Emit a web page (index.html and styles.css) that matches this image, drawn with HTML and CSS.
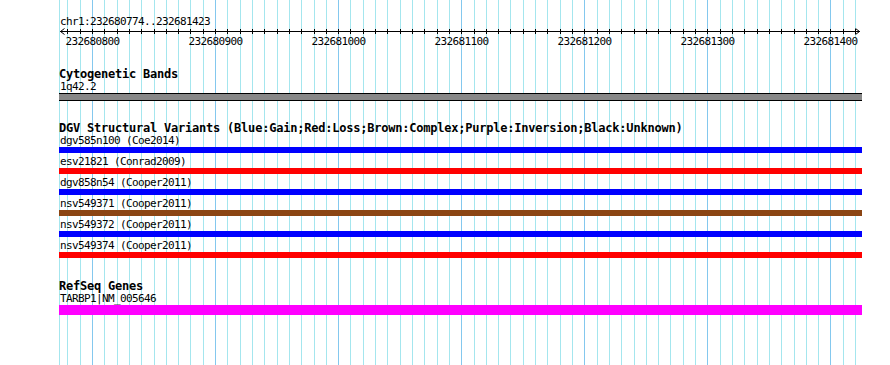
FILE: index.html
```html
<!DOCTYPE html>
<html lang="en">
  <head>
    <meta charset="UTF-8" />
    <meta name="viewport" content="width=device-width, initial-scale=1.0" />
    <title>chr1:232680774..232681423</title>
    <link rel="stylesheet" href="styles.css">
  </head>
  <body>
    <div class="panel">
      <svg class="grid" id="grid" width="890" height="365"></svg>

      <div class="content">
        <div class="locus">chr1:232680774..232681423</div>
        <svg class="ruler" id="ruler" width="803" height="20"></svg>

        <section class="track track-cyto">
          <h3 class="track-title">Cytogenetic Bands</h3>
          <div class="feature">
            <div class="feature-label">1q42.2</div>
            <div class="bar bar-band"></div>
          </div>
        </section>

        <section class="track track-dgv">
          <h3 class="track-title">DGV Structural Variants (Blue:Gain;Red:Loss;Brown:Complex;Purple:Inversion;Black:Unknown)</h3>
          <div class="feature">
            <div class="feature-label">dgv585n100 (Coe2014)</div>
            <div class="bar bar-gain"></div>
          </div>
          <div class="feature">
            <div class="feature-label">esv21821 (Conrad2009)</div>
            <div class="bar bar-loss"></div>
          </div>
          <div class="feature">
            <div class="feature-label">dgv858n54 (Cooper2011)</div>
            <div class="bar bar-gain"></div>
          </div>
          <div class="feature">
            <div class="feature-label">nsv549371 (Cooper2011)</div>
            <div class="bar bar-complex"></div>
          </div>
          <div class="feature">
            <div class="feature-label">nsv549372 (Cooper2011)</div>
            <div class="bar bar-gain"></div>
          </div>
          <div class="feature">
            <div class="feature-label">nsv549374 (Cooper2011)</div>
            <div class="bar bar-loss"></div>
          </div>
        </section>

        <section class="track track-genes">
          <h3 class="track-title">RefSeq Genes</h3>
          <div class="feature">
            <div class="feature-label">TARBP1|NM_005646</div>
            <div class="bar bar-gene"></div>
          </div>
        </section>
      </div>
    </div>

    <script>
      document.addEventListener("DOMContentLoaded", function () {
        const svgNS = "http://www.w3.org/2000/svg";
        const grid = document.getElementById("grid");
        const ruler = document.getElementById("ruler");
        const trackLeft = 59;
        const firstTick = 232680780;
        const lastTick = 232681420;

        // pixel column of a base position (1.2308 px per bp)
        function xAt(pos) {
          return Math.floor(92.5 + (pos - 232680800) * 1.2308);
        }

        function add(parent, tag, attrs) {
          const el = document.createElementNS(svgNS, tag);
          for (const key in attrs) {
            el.setAttribute(key, attrs[key]);
          }
          parent.appendChild(el);
          return el;
        }

        // grid lines behind the tracks
        add(grid, "rect", { x: trackLeft, y: 0, width: 1, height: 365, class: "grid-minor" });
        for (let pos = firstTick; pos <= lastTick; pos += 10) {
          add(grid, "rect", {
            x: xAt(pos),
            y: 0,
            width: 1,
            height: 365,
            class: pos % 100 === 0 ? "grid-major" : "grid-minor",
          });
        }

        // ruler: axis, arrows, ticks and labels
        add(ruler, "rect", { x: 1, y: 3, width: 800, height: 1, class: "axis" });
        add(ruler, "polyline", { points: "5.5,0.5 1.5,3.5 5.5,6.5", class: "arrow" });
        add(ruler, "polyline", { points: "796.5,0.5 800.5,3.5 796.5,6.5", class: "arrow" });

        for (let pos = firstTick; pos <= lastTick; pos += 10) {
          const x = xAt(pos) - trackLeft;
          add(ruler, "rect", { x: x, y: 1, width: 1, height: 5, class: "axis" });
          if (pos % 100 === 0) {
            const label = add(ruler, "text", {
              x: x + 0.5,
              y: 17,
              class: "ruler-label",
              "text-anchor": "middle",
            });
            label.textContent = pos;
          }
        }
      });
    </script>
  </body>
</html>
```

FILE: styles.css
```css
* {
  box-sizing: border-box;
  margin: 0;
  padding: 0;
}

body {
  background-color: #ffffff;
  font-family: "DejaVu Sans Mono", "Liberation Mono", monospace;
  color: #000000;
}

.panel {
  position: relative;
  width: 890px;
  height: 365px;
  overflow: hidden;
  background-color: #ffffff;
}

.grid {
  position: absolute;
  left: 0;
  top: 0;
}

.grid-minor {
  fill: #a4e6ee;
}

.grid-major {
  fill: #84c8ee;
}

.content {
  position: relative;
  width: 862px;
  padding: 15px 0 0 59px;
}

.locus,
.feature-label {
  font-size: 11px;
  line-height: 13px;
  letter-spacing: -0.62px;
  padding-left: 1px;
  white-space: nowrap;
}

.ruler {
  display: block;
}

.ruler .axis {
  fill: #000000;
}

.ruler .arrow {
  fill: none;
  stroke: #000000;
  stroke-width: 1;
}

.ruler-label {
  font-family: "DejaVu Sans Mono", "Liberation Mono", monospace;
  font-size: 11px;
  letter-spacing: -0.62px;
  fill: #000000;
}

/* Tracks */
.track-cyto {
  margin-top: 20px;
}

.track-dgv {
  margin-top: 21px;
}

.track-genes {
  margin-top: 22px;
}

.track-title {
  font-size: 12px;
  font-weight: bold;
  line-height: 12px;
  letter-spacing: -0.22px;
  white-space: nowrap;
}

.feature + .feature {
  margin-top: 2px;
}

.bar {
  width: 803px;
  height: 6px;
}

.bar-band {
  height: 8px;
  background-color: #888888;
  border-top: 1px solid #000000;
  border-bottom: 1px solid #000000;
}

.bar-gain {
  background-color: #0000ff;
}

.bar-loss {
  background-color: #ff0000;
}

.bar-complex {
  background-color: #8b4513;
}

.bar-gene {
  height: 10px;
  background-color: #ff00ff;
}
```
